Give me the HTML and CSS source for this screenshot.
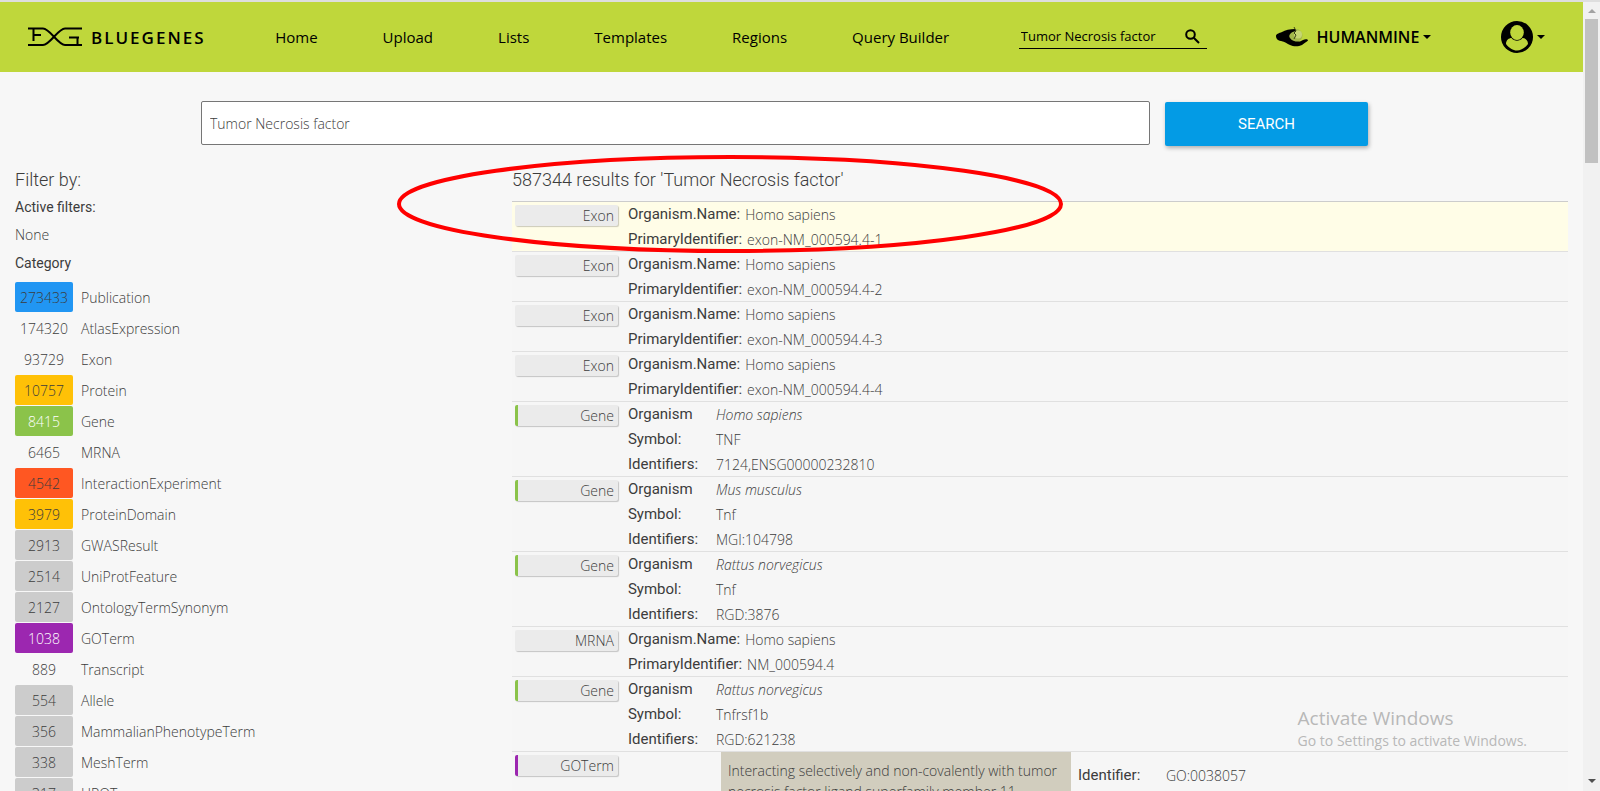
FILE: index.html
```html
<!DOCTYPE html>
<html lang="en">
<head>
<meta charset="utf-8">
<title>BlueGenes search</title>
<link rel="stylesheet" href="styles.css">
</head>
<body>
<div class="page">
  <header class="navbar">
    <a class="brand" href="#">
      <svg class="brand-icon" width="54" height="20" viewBox="0 0 54 20" fill="none" stroke="#000" stroke-width="2">
        <path d="M0 1.500H15C22 1.500 30 18 37 18H54M0 18H15C22 18 30 1.500 37 1.500H54"/>
        <path d="M5.500 2V14M5.500 8H13M41 10.500H51M49.500 11V18"/>
      </svg>
      <span>BLUEGENES</span>
    </a>
    <nav class="links">
      <a href="#">Home</a>
      <a href="#">Upload</a>
      <a href="#">Lists</a>
      <a href="#">Templates</a>
      <a href="#">Regions</a>
      <a href="#">Query Builder</a>
    </nav>
    <form class="quick">
      <input type="text" aria-label="Quick search" value="Tumor Necrosis factor">
      <button type="button" aria-label="Go">
        <svg width="15" height="15" viewBox="0 0 15 15" fill="none" stroke="#000" stroke-width="2"><circle cx="5.500" cy="5.500" r="4.300"/><path d="M8.700 8.700L14 14"/></svg>
      </button>
    </form>
    <button class="mine" type="button">
      <svg width="32" height="20" viewBox="0 0 32 20">
        <circle cx="20" cy="8.500" r="6.500" fill="#a3b84a"/>
        <circle cx="22" cy="7.500" r="4" fill="#c6d672"/>
        <path d="M0 9C0 7 3 6 6 5C9 3 14 2 19 2L20 4C15 5 12 8 14 11C16 14 20 15 24 14.500L27 13C29 12 32 12 32 13.500C31 15 28 16 26 18C22 20 17 19.500 14 18C11 17 9 14.500 5 14C1 13.500 0 11 0 9Z"/>
        <path d="M18 0L20 4L18 6L20 8L18 12" fill="none" stroke="#3c4415"/>
      </svg>
      <span>HUMANMINE</span>
      <i class="caret"></i>
    </button>
    <button class="user" type="button" aria-label="Account">
      <svg width="32" height="32" viewBox="0 0 32 32">
        <circle cx="16" cy="16" r="16"/>
        <path d="M5 23C5 19 8 17 10.500 17C13 20.500 19 20.500 21.500 17C24 17 27 19 27 23C24 27 20 29.500 16 29.500C12 29.500 8 27 5 23Z" fill="#bfd73b"/>
        <ellipse cx="16" cy="11.500" rx="6.800" ry="7.500" fill="#bfd73b"/>
      </svg>
      <i class="caret"></i>
    </button>
  </header>

  <form class="search">
    <input type="text" aria-label="Search" value="Tumor Necrosis factor">
    <button type="button">SEARCH</button>
  </form>

  <main class="columns">
    <aside>
      <h4>Filter by:</h4>
      <h5>Active filters:</h5>
      <p>None</p>
      <h5>Category</h5>
      <table class="facets">
        <tr><td class="blue">273433</td><td>Publication</td></tr>
        <tr><td>174320</td><td>AtlasExpression</td></tr>
        <tr><td>93729</td><td>Exon</td></tr>
        <tr><td class="amber">10757</td><td>Protein</td></tr>
        <tr><td class="green">8415</td><td>Gene</td></tr>
        <tr><td>6465</td><td>MRNA</td></tr>
        <tr><td class="orange">4542</td><td>InteractionExperiment</td></tr>
        <tr><td class="amber">3979</td><td>ProteinDomain</td></tr>
        <tr><td class="grey">2913</td><td>GWASResult</td></tr>
        <tr><td class="grey">2514</td><td>UniProtFeature</td></tr>
        <tr><td class="grey">2127</td><td>OntologyTermSynonym</td></tr>
        <tr><td class="purple">1038</td><td>GOTerm</td></tr>
        <tr><td>889</td><td>Transcript</td></tr>
        <tr><td class="grey">554</td><td>Allele</td></tr>
        <tr><td class="grey">356</td><td>MammalianPhenotypeTerm</td></tr>
        <tr><td class="grey">338</td><td>MeshTerm</td></tr>
        <tr><td class="grey">317</td><td>HPOTerm</td></tr>
      </table>
    </aside>

    <section class="results">
      <h4>587344 results for 'Tumor Necrosis factor'</h4>
      <article class="hit active"><span class="tag">Exon</span><dl><div><dt>Organism.Name:</dt><dd>Homo sapiens</dd></div><div><dt>PrimaryIdentifier:</dt><dd>exon-NM_000594.4-1</dd></div></dl></article>
      <article class="hit"><span class="tag">Exon</span><dl><div><dt>Organism.Name:</dt><dd>Homo sapiens</dd></div><div><dt>PrimaryIdentifier:</dt><dd>exon-NM_000594.4-2</dd></div></dl></article>
      <article class="hit"><span class="tag">Exon</span><dl><div><dt>Organism.Name:</dt><dd>Homo sapiens</dd></div><div><dt>PrimaryIdentifier:</dt><dd>exon-NM_000594.4-3</dd></div></dl></article>
      <article class="hit"><span class="tag">Exon</span><dl><div><dt>Organism.Name:</dt><dd>Homo sapiens</dd></div><div><dt>PrimaryIdentifier:</dt><dd>exon-NM_000594.4-4</dd></div></dl></article>
      <article class="hit"><span class="tag gene">Gene</span><dl class="aligned"><div><dt>Organism</dt><dd><em>Homo sapiens</em></dd></div><div><dt>Symbol:</dt><dd>TNF</dd></div><div><dt>Identifiers:</dt><dd>7124,ENSG00000232810</dd></div></dl></article>
      <article class="hit"><span class="tag gene">Gene</span><dl class="aligned"><div><dt>Organism</dt><dd><em>Mus musculus</em></dd></div><div><dt>Symbol:</dt><dd>Tnf</dd></div><div><dt>Identifiers:</dt><dd>MGI:104798</dd></div></dl></article>
      <article class="hit"><span class="tag gene">Gene</span><dl class="aligned"><div><dt>Organism</dt><dd><em>Rattus norvegicus</em></dd></div><div><dt>Symbol:</dt><dd>Tnf</dd></div><div><dt>Identifiers:</dt><dd>RGD:3876</dd></div></dl></article>
      <article class="hit"><span class="tag">MRNA</span><dl><div><dt>Organism.Name:</dt><dd>Homo sapiens</dd></div><div><dt>PrimaryIdentifier:</dt><dd>NM_000594.4</dd></div></dl></article>
      <article class="hit"><span class="tag gene">Gene</span><dl class="aligned"><div><dt>Organism</dt><dd><em>Rattus norvegicus</em></dd></div><div><dt>Symbol:</dt><dd>Tnfrsf1b</dd></div><div><dt>Identifiers:</dt><dd>RGD:621238</dd></div></dl></article>
      <article class="hit"><span class="tag go">GOTerm</span><p class="description">Interacting selectively and non-covalently with tumor necrosis factor ligand superfamily member 11.</p><dl class="aligned term"><div><dt>Identifier:</dt><dd>GO:0038057</dd></div></dl></article>
    </section>
  </main>

  <svg class="marker" width="668" height="98" viewBox="0 0 668 98"><ellipse cx="334" cy="49" rx="331" ry="47" fill="none" stroke="#f00" stroke-width="4"/></svg>
  <div class="watermark"><strong>Activate Windows</strong><span>Go to Settings to activate Windows.</span></div>
</div>
<div class="scrollbar">
  <i class="arrow up"></i>
  <i class="thumb"></i>
  <i class="arrow down"></i>
</div>
</body>
</html>
```
FILE: styles.css
```css
* { box-sizing: border-box; }

body {
  margin: 0;
  height: 100vh;
  display: flex;
  overflow: hidden;
  border-top: 2px solid #dedede;
  background: #f7f7f7;
  color: #3c3c3c;
  font: 300 14px/25px "Open Sans", "Noto Sans", sans-serif;
}

h4, h5, p, dl, dd { margin: 0; }
a { color: inherit; text-decoration: none; }
button, input { font: inherit; color: inherit; border: 0; background: none; padding: 0; }

.page { flex: 1; min-width: 0; position: relative; overflow: hidden; }

.navbar {
  display: flex;
  align-items: center;
  justify-content: space-between;
  height: 70px;
  padding: 0 38px 0 28px;
  background: #bfd73b;
  color: #000;
  font-size: 15px;
  font-weight: 400;
}
.brand {
  display: flex;
  align-items: center;
  gap: 9px;
  font-size: 17px;
  font-weight: 600;
  letter-spacing: 2px;
}
.links { display: flex; gap: 65px; }
.quick {
  display: flex;
  align-items: center;
  width: 188px;
  height: 24px;
  padding: 0 7px 0 2px;
  border-bottom: 1px solid #000;
  font-size: 13px;
}
.quick input { flex: 1; min-width: 0; }
.quick button { display: flex; }
.mine, .user { display: flex; align-items: center; }
.mine { gap: 8px; font-size: 16px; font-weight: 600; }
.caret { border: 4px solid transparent; border-top-color: #000; border-bottom: 0; }
.mine .caret { margin-left: -4px; }
.user { gap: 4px; }

.search { display: flex; gap: 15px; padding: 29px 215px 0 201px; }
.search input {
  flex: 1;
  min-width: 0;
  height: 44px;
  padding: 0 8px;
  border: 1px solid #767676;
  border-radius: 2px;
  background: #fff;
}
.search button {
  width: 203px;
  height: 44px;
  margin-top: 1px;
  border-radius: 2px;
  background: #039be5;
  box-shadow: 1px 2px 4px rgba(0, 0, 0, .3);
  color: #fff;
  font: 400 15px Roboto, sans-serif;
}

.columns { display: grid; grid-template-columns: 32% 1fr; padding: 22px 15px 0; }
h4 { font: 300 18px/24px Roboto, sans-serif; }
h5 { font: 400 14px/28px Roboto, sans-serif; }
aside h4 { padding-bottom: 1px; }
aside p { line-height: 28px; }

.facets { border-spacing: 0 1px; margin-top: 4px; }
.facets td { height: 30px; padding: 0 0 0 8px; }
.facets td:first-child { width: 58px; padding: 0; border-radius: 2px; text-align: center; }
.blue { background: #2196f3; }
.amber { background: #ffc107; }
.orange { background: #ff5722; }
.grey { background: #ccc; }
.green { background: #8bc34a; color: #fff; }
.purple { background: #9c27b0; color: #fff; }

.results h4 { height: 34px; border-bottom: 1px solid #ccc; }
.hit {
  display: flex;
  align-items: flex-start;
  padding-left: 3px;
  background: #f6f6f6;
  box-shadow: inset 0 -1px #e0e0e0;
}
.active { background: #fffde7; }
.tag {
  width: 103px;
  height: 21px;
  margin: 3px 10px 0 0;
  padding-right: 4px;
  border-radius: 2px;
  background: #ebebeb;
  box-shadow: 1px 1px 1px rgba(0, 0, 0, .2);
  line-height: 21px;
  text-align: right;
}
.gene { border-left: 3px solid #8bc34a; }
.go { border-left: 3px solid #9c27b0; }
dl div { display: flex; gap: 5px; }
dt { font: 400 15px/25px Roboto, sans-serif; }
.aligned div { gap: 0; }
.aligned dt { width: 88px; }
.description {
  width: 350px;
  margin-left: 93px;
  padding: 8px 7px;
  background: #d1cdbe;
  line-height: 21px;
}
.term { padding: 11px 0 0 7px; }

.marker { position: absolute; left: 396px; top: 153px; }
.watermark {
  position: absolute;
  right: 56px;
  bottom: 39px;
  display: flex;
  flex-direction: column;
  color: #b8b8b8;
  font-weight: 400;
  line-height: 22px;
}
.watermark strong { font-size: 19px; font-weight: 400; line-height: 24px; }

.scrollbar {
  width: 17px;
  padding: 7px 2px 8px;
  display: flex;
  flex-direction: column;
  align-items: center;
  background: #f1f1f1;
}
.arrow { border: 4px solid transparent; }
.up { border-top: 0; border-bottom-color: #a3a3a3; }
.down { border-bottom: 0; border-top-color: #505050; margin-top: auto; }
.thumb { width: 13px; height: 144px; margin-top: 6px; background: #c1c1c1; }
```
